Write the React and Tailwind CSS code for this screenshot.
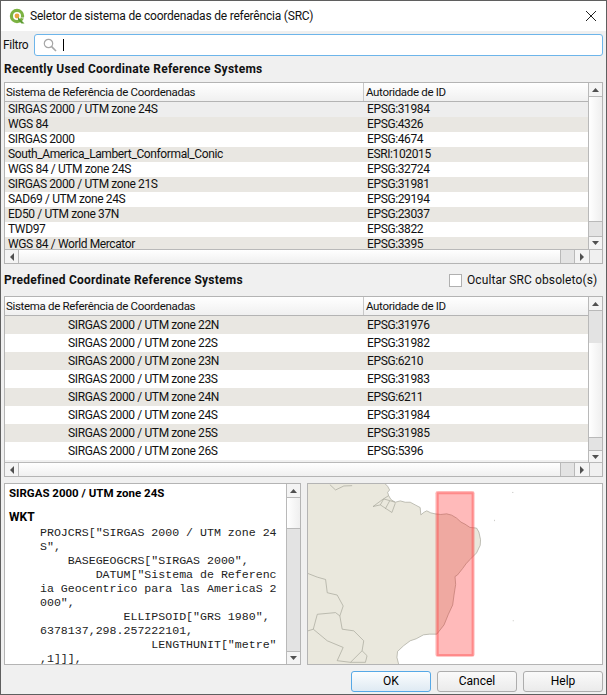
const recent = [
  ["SIRGAS 2000 / UTM zone 24S", "EPSG:31984"],
  ["WGS 84", "EPSG:4326"],
  ["SIRGAS 2000", "EPSG:4674"],
  ["South_America_Lambert_Conformal_Conic", "ESRI:102015"],
  ["WGS 84 / UTM zone 24S", "EPSG:32724"],
  ["SIRGAS 2000 / UTM zone 21S", "EPSG:31981"],
  ["SAD69 / UTM zone 24S", "EPSG:29194"],
  ["ED50 / UTM zone 37N", "EPSG:23037"],
  ["TWD97", "EPSG:3822"],
  ["WGS 84 / World Mercator", "EPSG:3395"],
];

const predefined = [
  ["SIRGAS 2000 / UTM zone 22N", "EPSG:31976"],
  ["SIRGAS 2000 / UTM zone 22S", "EPSG:31982"],
  ["SIRGAS 2000 / UTM zone 23N", "EPSG:6210"],
  ["SIRGAS 2000 / UTM zone 23S", "EPSG:31983"],
  ["SIRGAS 2000 / UTM zone 24N", "EPSG:6211"],
  ["SIRGAS 2000 / UTM zone 24S", "EPSG:31984"],
  ["SIRGAS 2000 / UTM zone 25S", "EPSG:31985"],
  ["SIRGAS 2000 / UTM zone 26S", "EPSG:5396"],
];

const wkt = [
  'PROJCRS["SIRGAS 2000 / UTM zone 24',
  'S",',
  '    BASEGEOGCRS["SIRGAS 2000",',
  '        DATUM["Sistema de Referenc',
  'ia Geocentrico para las AmericaS 2',
  '000",',
  '            ELLIPSOID["GRS 1980",',
  "6378137,298.257222101,",
  '                LENGTHUNIT["metre"',
  ",1]]],",
];

const Arrow = ({ dir }) => {
  const points = {
    up: "1,5 8,5 4.5,1",
    down: "1,1 8,1 4.5,5",
    left: "5,0 5,8 1,4",
    right: "1,0 1,8 5,4",
  };
  const vertical = dir === "up" || dir === "down";
  return (
    <svg width={vertical ? 9 : 6} height={vertical ? 6 : 8} className="block">
      <polygon points={points[dir]} fill="#505050" />
    </svg>
  );
};

const VScroll = ({ gapTop, thumb, gapBottom }) => {
  return (
    <div className="w-[14px] shrink-0 flex flex-col border-l border-[#b9b9b9] bg-[#e3e3e3]">
      <div className="h-[14px] shrink-0 flex items-center justify-center bg-[#f4f4f4] border-b border-[#b9b9b9]">
        <Arrow dir="up" />
      </div>
      <div style={{ height: gapTop }} className="shrink-0" />
      <div
        style={{ height: thumb }}
        className="shrink-0 bg-linear-to-r from-white to-[#efefef] border-b border-[#b9b9b9]"
      />
      <div style={{ height: gapBottom }} className="shrink-0" />
      <div className="flex-1 flex items-center justify-center bg-[#f4f4f4] border-t border-[#b9b9b9]">
        <Arrow dir="down" />
      </div>
    </div>
  );
};

const HScroll = () => {
  return (
    <div className="h-[14px] shrink-0 flex border-t border-[#b9b9b9]">
      <div className="w-[14px] flex items-center justify-center bg-[#f4f4f4] border-r border-[#b9b9b9]">
        <Arrow dir="left" />
      </div>
      <div className="w-[541px] bg-linear-to-b from-white to-[#f0f0f0]" />
      <div className="w-[15px] bg-[#e3e3e3] border-x border-[#b9b9b9]" />
      <div className="w-[14px] flex items-center justify-center bg-[#f4f4f4]">
        <Arrow dir="right" />
      </div>
      <div className="flex-1 bg-[#f0f0f0] border-l border-[#b9b9b9]" />
    </div>
  );
};

const CrsTable = ({ rows, tableHeight, headerHeight, rowClass, indentClass, firstGray, scroll }) => {
  return (
    <div style={{ height: tableHeight }} className="flex flex-col border border-[#b4b4b4] bg-[#f0f0f0]">
      <div className="flex-1 flex min-h-0">
        <div className="flex-1 min-w-0 flex flex-col">
          <div
            style={{ height: headerHeight }}
            className="shrink-0 flex text-[11.5px] tracking-[-0.33px] border-b border-[#b4b4b4] bg-linear-to-b from-white to-[#f0f0f0]"
          >
            <div className="w-[359px] pl-[1px] border-r border-[#c8c8c8] flex items-center">
              Sistema de Referência de Coordenadas
            </div>
            <div className="pl-[2px] flex items-center">Autoridade de ID</div>
          </div>
          <div className="flex-1 min-h-0 overflow-hidden tracking-[-0.38px]">
            {rows.map((row, i) => {
              let bg = i % 2 === 0 ? "bg-white" : "bg-[#e9e7e2]";
              if (firstGray) bg = i % 2 === 0 ? "bg-[#e9e7e2]" : "bg-white";
              if (!firstGray && i === 0) bg = "bg-[#eeeeee]";
              return (
                <div key={row[1] + i} className={`flex items-center ${rowClass} ${bg}`}>
                  <div className={`w-[360px] shrink-0 ${indentClass}`}>{row[0]}</div>
                  <div className="pl-[2px]">{row[1]}</div>
                </div>
              );
            })}
          </div>
        </div>
        <VScroll gapTop={scroll[0]} thumb={scroll[1]} gapBottom={scroll[2]} />
      </div>
      <HScroll />
    </div>
  );
};

const QgisLogo = () => {
  return (
    <svg width="17" height="17" viewBox="0 0 17 17" className="shrink-0">
      <circle cx="8" cy="8" r="5.6" fill="none" stroke="#7cb342" strokeWidth="3.2" />
      <circle cx="8" cy="8" r="2.4" fill="#e8a33d" />
      <path d="M9 9 L15.5 15.5 L12.5 15.5 L9 12 Z" fill="#5d9c33" />
      <path d="M11 9 L15 9 L15 12 Z" fill="#f0f0f0" opacity="0.5" />
    </svg>
  );
};

const MapView = () => {
  const coast =
    "L262 44 L268 55 L262 62 L265 72 L272 84 L285 92 L300 88 L315 92 L330 92 L345 100 L360 108 L362 130 L372 122 L380 118 L392 124 L405 127 L422 129 L440 127 L455 131 L470 140 L483 152 L495 158 L510 168 L530 170 L537 182 L542 205 L541 222 L530 245 L510 265 L498 278 L488 292 L472 312 L465 316 L467 340 L462 372 L458 402 L445 430 L432 462 L410 490 L388 490 L370 492 L348 504 L330 510 L310 525 L292 542 L290 560 L295 580";
  return (
    <svg viewBox="22 37 886 543" className="block w-full h-full" preserveAspectRatio="none">
      <rect x="22" y="37" width="886" height="543" fill="#ffffff" />
      <path d={`M22 37 L255 37 ${coast} L22 580 Z`} fill="#eae8dd" />
      <path d={`M255 37 ${coast}`} fill="none" stroke="#a3a297" strokeWidth="2" />
      <path
        d="M88 39 L105 55 L130 43 L155 42 M22 307 L50 318 L75 325 L80 365 L110 372 L128 405 L118 435 L105 425 L50 430 L38 475 L22 480 M38 475 L80 510 L128 530 L110 570 L150 575 L185 540 L190 510 L160 480 L125 475 L118 435 M185 540 L200 555 L195 575 L150 575 M265 72 L245 85 L218 105 L240 100 L255 110 L275 123 L285 95 M240 100 L250 82 L285 92 M255 112 L268 88"
        fill="none"
        stroke="#a3a297"
        strokeWidth="2"
      />
      <rect x="406" y="58" width="118" height="500" rx="7" fill="#ff0000" opacity="0.27" />
      <rect x="413" y="65" width="105" height="488" fill="none" stroke="#ff4040" strokeWidth="6" opacity="0.4" />
      <rect x="637" y="61" width="4" height="2" fill="#b5b5b0" />
      <rect x="583" y="145" width="2" height="4" fill="#b5b5b0" />
      <rect x="639" y="448" width="3" height="3" fill="#c5c5c0" />
    </svg>
  );
};

const DialogButton = ({ label, active }) => {
  return (
    <button
      type="button"
      className={
        active
          ? "w-[80px] h-[21px] rounded-[3px] border border-[#56a8e6] bg-linear-to-b from-[#fbfdfe] to-[#dfeaf3] text-black"
          : "w-[80px] h-[21px] rounded-[3px] border border-[#adadad] bg-linear-to-b from-[#fafafa] to-[#ebebeb] text-black"
      }
    >
      {label}
    </button>
  );
};

export default function App() {
  return (
    <div className="w-[607px] h-[695px] flex flex-col overflow-hidden border border-[#5f5f5f] bg-[#f0f0f0] text-[12px] leading-[15px] text-[#111] font-['Roboto',sans-serif]">
      <div className="h-[30px] shrink-0 flex items-center bg-white pl-[8px] pr-[9px]">
        <QgisLogo />
        <div className="ml-[4px] flex-1 tracking-[-0.2px]">Seletor de sistema de coordenadas de referência (SRC)</div>
        <svg width="12" height="12" viewBox="0 0 12 12">
          <path d="M1 1 L11 11 M11 1 L1 11" stroke="#222" strokeWidth="1" />
        </svg>
      </div>

      <div className="flex-1 flex flex-col px-[3px]">
        <div className="mt-[3px] h-[22px] flex items-center">
          <div className="w-[31px] shrink-0 -ml-[1px] tracking-[-0.3px]">Filtro</div>
          <div className="flex-1 h-full flex items-center rounded-[3px] border border-[#6db5ea] bg-white pl-[8px]">
            <svg width="14" height="14" viewBox="0 0 14 14" className="shrink-0">
              <circle cx="5.5" cy="5.5" r="4.2" fill="none" stroke="#a6a6a6" strokeWidth="1.2" />
              <path d="M8.6 8.6 L13 13" stroke="#a6a6a6" strokeWidth="1.6" />
            </svg>
            <div className="ml-[6px] w-[1px] h-[12px] bg-black" />
          </div>
        </div>

        <div className="h-[26px] flex items-center font-bold tracking-[0.27px]">Recently Used Coordinate Reference Systems</div>

        <CrsTable
          rows={recent}
          tableHeight={182}
          headerHeight={19}
          rowClass="h-[15px]"
          indentClass="pl-[3px]"
          firstGray={false}
          scroll={[0, 125, 14]}
        />

        <div className="h-[32px] flex items-center">
          <div className="flex-1 font-bold tracking-[0.25px]">Predefined Coordinate Reference Systems</div>
          <div className="w-[154px] shrink-0 flex items-center">
            <div className="w-[13px] h-[13px] shrink-0 border border-[#b0b0b0] bg-white" />
            <div className="ml-[5px] tracking-[0.1px]">Ocultar SRC obsoleto(s)</div>
          </div>
        </div>

        <CrsTable
          rows={predefined}
          tableHeight={181}
          headerHeight={19}
          rowClass="h-[18px]"
          indentClass="pl-[63px]"
          firstGray={true}
          scroll={[32, 95, 12]}
        />

        <div className="mt-[6px] h-[182px] flex gap-[6px]">
          <div className="w-[297px] shrink-0 flex border border-[#b4b4b4] bg-white">
            <div className="flex-1 min-w-0 overflow-hidden pl-[4px]">
              <div className="mt-[2px] text-[11.5px] leading-[15px] font-bold text-black">SIRGAS 2000 / UTM zone 24S</div>
              <div className="mt-[9px] leading-[15px] font-bold text-black">WKT</div>
              <div className="mt-[1px] pl-[31px] font-['Liberation_Mono',monospace] text-[11.6px] leading-[14px] whitespace-pre text-[#222]">
                {wkt.map((line, i) => (
                  <div key={i}>{line}</div>
                ))}
              </div>
            </div>
            <VScroll gapTop={0} thumb={31} gapBottom={122} />
          </div>
          <div className="flex-1 min-w-0 border border-[#b4b4b4] bg-white">
            <MapView />
          </div>
        </div>

        <div className="mt-[6px] flex justify-end gap-[6px]">
          <DialogButton label="OK" active />
          <DialogButton label="Cancel" />
          <DialogButton label="Help" />
        </div>
      </div>
    </div>
  );
}
